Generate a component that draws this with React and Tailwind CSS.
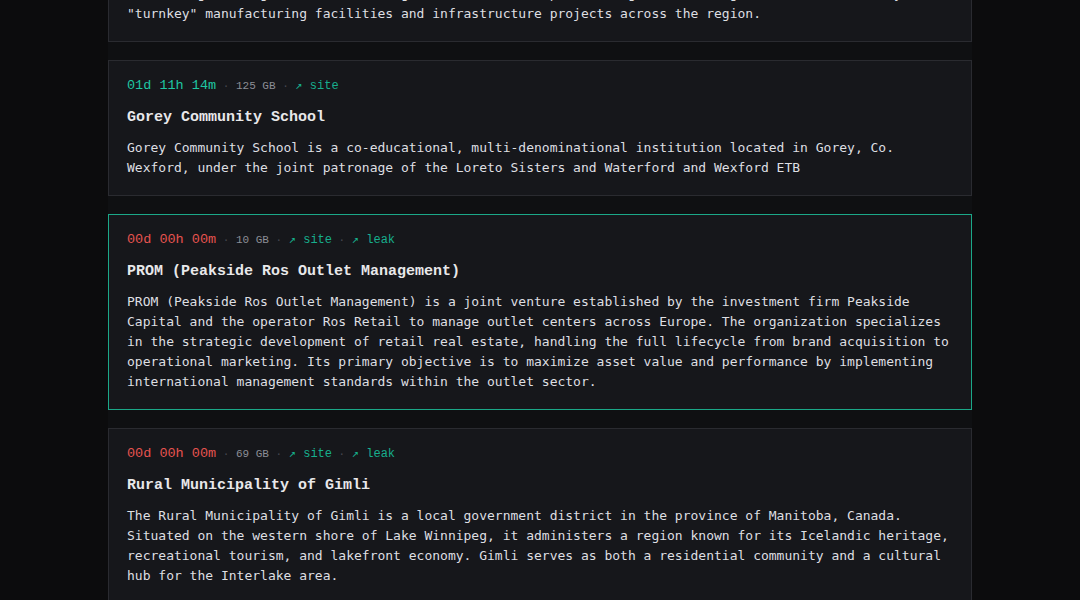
import React from 'react';

const entries = [
  {
    id: 'baltic',
    time: '02d 06h 41m',
    live: true,
    size: '48 GB',
    leak: false,
    title: 'Baltic Engineering Partners',
    body: 'Baltic Engineering Partners is a regional contractor specializing in the design, build and delivery of "turnkey" manufacturing facilities and infrastructure projects across the region.',
  },
  {
    id: 'gorey',
    time: '01d 11h 14m',
    live: true,
    size: '125 GB',
    leak: false,
    title: 'Gorey Community School',
    body: 'Gorey Community School is a co-educational, multi-denominational institution located in Gorey, Co. Wexford, under the joint patronage of the Loreto Sisters and Waterford and Wexford ETB',
  },
  {
    id: 'prom',
    time: '00d 00h 00m',
    live: false,
    size: '10 GB',
    leak: true,
    active: true,
    title: 'PROM (Peakside Ros Outlet Management)',
    body: 'PROM (Peakside Ros Outlet Management) is a joint venture established by the investment firm Peakside Capital and the operator Ros Retail to manage outlet centers across Europe. The organization specializes in the strategic development of retail real estate, handling the full lifecycle from brand acquisition to operational marketing. Its primary objective is to maximize asset value and performance by implementing international management standards within the outlet sector.',
  },
  {
    id: 'gimli',
    time: '00d 00h 00m',
    live: false,
    size: '69 GB',
    leak: true,
    title: 'Rural Municipality of Gimli',
    body: 'The Rural Municipality of Gimli is a local government district in the province of Manitoba, Canada. Situated on the western shore of Lake Winnipeg, it administers a region known for its Icelandic heritage, recreational tourism, and lakefront economy. Gimli serves as both a residential community and a cultural hub for the Interlake area.',
  },
];

const mono = "font-['Liberation_Mono','DejaVu_Sans_Mono',monospace]";

function Dot() {
  return <span className="text-[11px] text-[#474951] whitespace-pre"> · </span>;
}

function Card({ item, first }) {
  return (
    <div
      className={`bg-[#16171b] border px-[18px] pt-[19px] pb-[17px] ${
        item.active ? 'border-[#1ba888]' : 'border-[#2a2b30]'
      } ${first ? '-mt-[94px]' : ''}`}
    >
      <div className={`${mono} flex items-baseline h-[12px] leading-[12px] whitespace-pre`}>
        <span className={`text-[13.5px] ${item.live ? 'text-[#1fc6a2]' : 'text-[#e5534f]'}`}>
          {item.time}
        </span>
        <Dot />
        <span className="text-[11px] text-[#8c8e96]">{item.size}</span>
        <Dot />
        <span className="text-[12px] text-[#17ae8d]">↗ site</span>
        {item.leak && (
          <>
            <Dot />
            <span className="text-[12px] text-[#17ae8d]">↗ leak</span>
          </>
        )}
      </div>
      <h3 className={`${mono} mt-[16px] text-[15px] leading-[20px] font-bold text-[#e8e8ea]`}>
        {item.title}
      </h3>
      <p className="mt-[10px] font-['DejaVu_Sans_Mono',monospace] text-[13px] leading-[20px] text-[#dedfe2]">
        {item.body}
      </p>
    </div>
  );
}

export default function App() {
  return (
    <div className="min-h-screen bg-[#0c0c0d] overflow-hidden">
      <div className="w-[864px] mx-auto min-h-screen bg-[#0f1012] flex flex-col gap-[18px]">
        {entries.map((item, idx) => (
          <Card key={item.id} item={item} first={idx === 0} />
        ))}
      </div>
    </div>
  );
}
